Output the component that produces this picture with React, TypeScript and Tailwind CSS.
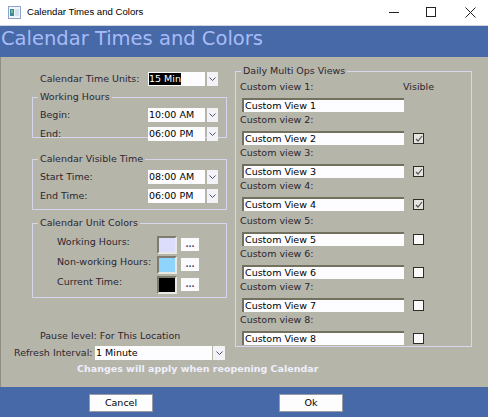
import { useState } from "react"

const BODY_BG = "bg-[#b6b5aa]"

const Chevron = () => (
  <svg width="7" height="4" viewBox="0 0 7 4">
    <path d="M0.5 0.5 L3.5 3.5 L6.5 0.5" stroke="#4d4d70" fill="none" strokeWidth="1" />
  </svg>
)

type SelectProps = {
  value: string
  boxClass: string
  arrowClass?: string
  highlighted?: boolean
}

const Select = ({ value, boxClass, arrowClass = "w-[11px] ml-[2px]", highlighted }: SelectProps) => (
  <div className="flex h-[14px]">
    <div className={`${boxClass} h-full bg-[#fdfdff] flex items-center pl-[1px] text-black`}>
      {highlighted ? <span className="bg-black text-white leading-[12px]">{value}</span> : value}
    </div>
    <div className={`${arrowClass} h-full bg-[#f3f3f7] flex items-center justify-center`}>
      <Chevron />
    </div>
  </div>
)

const Row = ({ label, value }: { label: string; value: string }) => (
  <div className="flex items-center h-[14px]">
    <span className="w-[108px]">{label}</span>
    <Select value={value} boxClass="w-[57px]" />
  </div>
)

const Legend = ({ text }: { text: string }) => (
  <span className={`absolute -top-[7px] left-[5px] px-[2px] leading-[12px] ${BODY_BG}`}>{text}</span>
)

const ColorRow = ({ label, swatch }: { label: string; swatch: string }) => (
  <div className="flex items-start h-[18px]">
    <span className="w-[100px] leading-[12px]">{label}</span>
    <div className={`w-[20px] h-[18px] border-2 border-t-[#7d7c70] border-l-[#7d7c70] border-b-[#e8e8e4] border-r-[#e8e8e4] ${swatch}`} />
    <button className="ml-[4px] mt-[2px] w-[18px] h-[13px] bg-[#fbfbfd] flex items-center justify-center text-[8px] leading-none font-bold text-[#3a3a6a]">
      ...
    </button>
  </div>
)

const CheckBox = ({ checked }: { checked: boolean }) => (
  <div
    className={`w-[11px] h-[11px] border border-[#2e2e22] flex items-center justify-center ${
      checked ? "bg-[#e4e4e0]" : "bg-[#fbfbfb]"
    }`}
  >
    {checked && (
      <svg width="8" height="7" viewBox="0 0 8 7">
        <path d="M1 4 L3 6 L7 1" stroke="#555" fill="none" strokeWidth="1.2" />
      </svg>
    )}
  </div>
)

const views = [
  { n: 1, checked: null },
  { n: 2, checked: true },
  { n: 3, checked: true },
  { n: 4, checked: true },
  { n: 5, checked: false },
  { n: 6, checked: false },
  { n: 7, checked: false },
  { n: 8, checked: false },
]

const App = () => {
  const [names] = useState(views.map((v) => `Custom View ${v.n}`))

  return (
    <div className="w-[488px] h-[417px] flex flex-col overflow-hidden font-['DejaVu_Sans',sans-serif] text-[9.5px] text-[#2c2630]">
      {/* window title bar */}
      <div className="h-[26px] bg-white border-b border-[#d4d4dc] flex items-center font-['Liberation_Sans',sans-serif] text-[9.6px] text-black">
        <svg width="13" height="13" viewBox="0 0 13 13" className="ml-[8px]">
          <rect x="0.5" y="0.5" width="12" height="12" fill="#f4f6fb" stroke="#8ea4cf" />
          <rect x="2" y="3" width="4" height="7" fill="#3d8a9a" />
          <rect x="3" y="4" width="2" height="3" fill="#6bbf8a" />
          <rect x="7" y="3" width="4" height="7" fill="#d6e2f2" />
        </svg>
        <span className="ml-[6px]">Calendar Times and Colors</span>
        <div className="ml-auto flex items-center h-full">
          <svg width="11" height="11" viewBox="0 0 11 11" className="mr-[26px]">
            <path d="M0 5.5 H10" stroke="#222" strokeWidth="1" />
          </svg>
          <svg width="11" height="11" viewBox="0 0 11 11" className="mr-[28px]">
            <rect x="0.5" y="0.5" width="9" height="9" fill="none" stroke="#222" />
          </svg>
          <svg width="11" height="11" viewBox="0 0 11 11" className="mr-[12px]">
            <path d="M0.5 0.5 L10.5 10.5 M10.5 0.5 L0.5 10.5" stroke="#222" strokeWidth="1" />
          </svg>
        </div>
      </div>

      {/* header */}
      <div className="h-[31px] bg-[#4769a8] pl-[1px] text-[19.5px] leading-[26px] text-[#a7bcf6]">
        Calendar Times and Colors
      </div>

      {/* body */}
      <div className={`flex-1 flex ${BODY_BG} border-l border-[#8f8e84]`}>
        {/* left column */}
        <div className="w-[234px] flex flex-col">
          <div className="mt-[15px] ml-[39px] flex items-center h-[14px]">
            <span className="w-[108px]">Calendar Time Units:</span>
            <Select value="15 Min" boxClass="w-[57px]" highlighted />
          </div>

          <div className="relative mt-[11px] ml-[31px] w-[195px] h-[41px] border border-[#d6d6ee] pt-[10px] pl-[7px] flex flex-col gap-[5px]">
            <Legend text="Working Hours" />
            <Row label="Begin:" value="10:00 AM" />
            <Row label="End:" value="06:00 PM" />
          </div>

          <div className="relative mt-[21px] ml-[31px] w-[195px] h-[51px] border border-[#d6d6ee] pt-[10px] pl-[7px] flex flex-col gap-[5px]">
            <Legend text="Calendar Visible Time" />
            <Row label="Start Time:" value="08:00 AM" />
            <Row label="End Time:" value="06:00 PM" />
          </div>

          <div className="relative mt-[13px] ml-[31px] w-[195px] h-[75px] border border-[#d6d6ee] pt-[12px] pl-[24px] flex flex-col gap-[2px]">
            <Legend text="Calendar Unit Colors" />
            <ColorRow label="Working Hours:" swatch="bg-[#dcdcfc]" />
            <ColorRow label="Non-working Hours:" swatch="bg-[#8ed4fc]" />
            <ColorRow label="Current Time:" swatch="bg-black" />
          </div>

          <div className="mt-[32px] ml-[39px] leading-[12px]">Pause level: For This Location</div>

          <div className="mt-[4px] ml-[13px] flex items-center h-[14px]">
            <span className="w-[81px]">Refresh Interval:</span>
            <Select value="1 Minute" boxClass="w-[117px]" arrowClass="w-[12px] ml-[1px]" />
          </div>

          <div className="mt-[3px] ml-[76px] w-[260px] leading-[12px] font-bold text-[#eef0fc] whitespace-nowrap">
            Changes will apply when reopening Calendar
          </div>
        </div>

        {/* right column */}
        <div className="flex-1">
          <div className="relative mt-[14px] w-[237px] h-[276px] border border-[#d6d6ee] pt-[9px] pl-[4px]">
            <Legend text="Daily Multi Ops Views" />
            {views.map((v, i) => (
              <div key={v.n} className={`flex flex-col ${v.n === 5 ? "mt-[2px]" : ""}`}>
                <div className="flex h-[13px] items-center">
                  <span className="w-[163px]">Custom view {v.n}:</span>
                  {v.n === 1 && <span>Visible</span>}
                </div>
                <div className="flex items-center mt-[4px] mb-[2px]">
                  <div className="ml-[2px] w-[162px] h-[14px] bg-[#fdfdff] border-t-2 border-l-2 border-t-[#727160] border-l-[#727160] flex items-center pl-[1px] text-black">
                    {names[i]}
                  </div>
                  {v.checked !== null && (
                    <div className="ml-[9px] mt-[1px]">
                      <CheckBox checked={v.checked} />
                    </div>
                  )}
                </div>
              </div>
            ))}
          </div>
        </div>
      </div>

      {/* footer */}
      <div className="h-[30px] bg-[#4769a8] flex items-start pt-[7px] pl-[89px] gap-[126px]">
        <button className="w-[64px] h-[18px] bg-[#fdfdfd] border border-[#9a9aa6] text-[9.5px] text-black">Cancel</button>
        <button className="w-[64px] h-[18px] bg-[#fdfdfd] border border-[#9a9aa6] text-[9.5px] text-black">Ok</button>
      </div>
    </div>
  )
}

export default App
